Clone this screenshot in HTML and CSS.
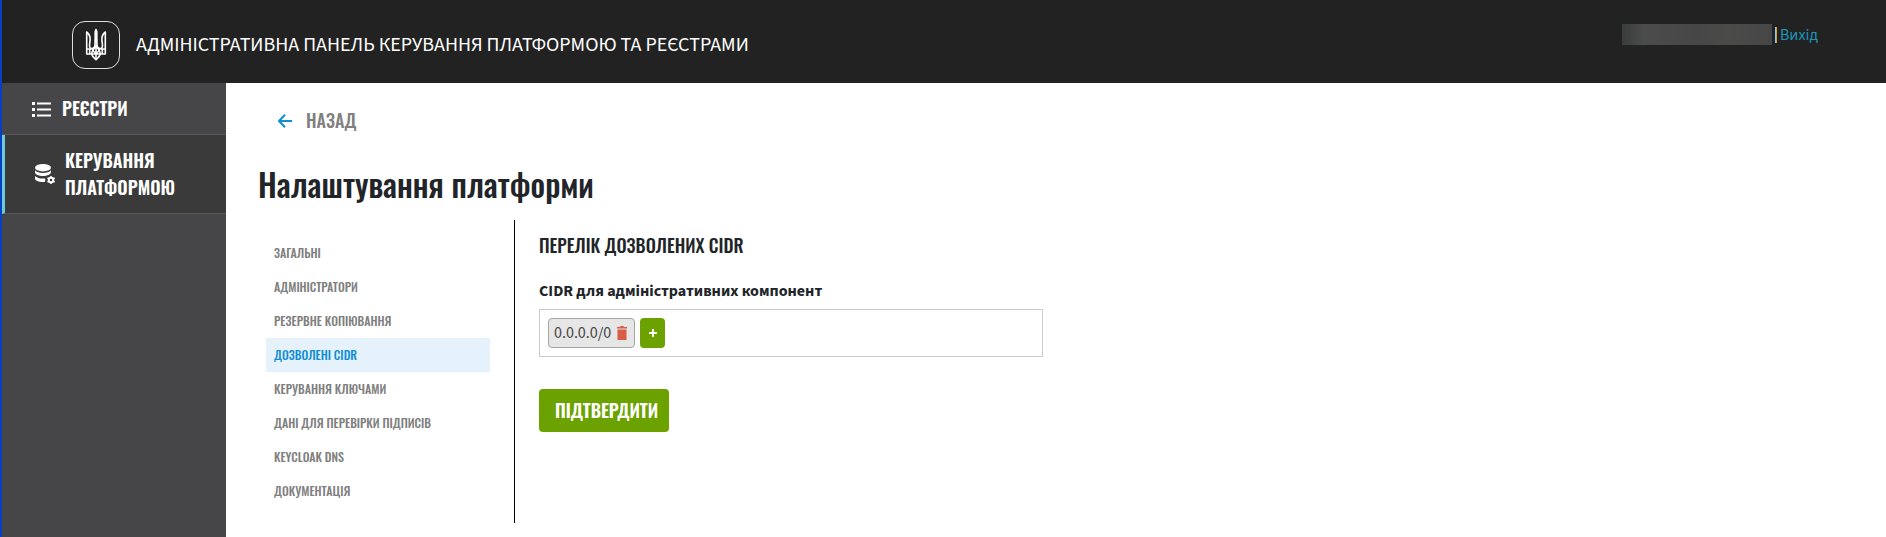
FILE: index.html
```html
<!DOCTYPE html>
<html lang="uk">
<head>
<meta charset="utf-8">
<title>Налаштування платформи</title>
<meta name="viewport" content="width=device-width, initial-scale=1">
<link rel="stylesheet" href="styles.css">
</head>
<body>
<header class="header">
  <div class="brand">
    <svg class="logo" viewBox="0 0 48 48" aria-hidden="true">
      <rect x=".5" y=".5" width="47" height="47" rx="12.5" fill="none" stroke="#fff" stroke-opacity=".85"/>
      <g fill="none" stroke="#fff" stroke-width="1.600" stroke-linejoin="round">
        <path d="M14.7 11v22h4.900c.6 2.500 2.300 3.900 4.400 5.700 2.100-1.800 3.800-3.200 4.400-5.700h4.900V11c-2.600 2-3.500 4.500-3.400 7.500.1 2.800.9 5.500.5 7.200-.3 1.300-1.200 1.900-2.600 1.800-2-.3-2.800-2.300-2.800-4.200l-.3-13L24 8.500l-.7 1.800-.3 13c0 1.900-.8 3.900-2.800 4.200-1.400.1-2.300-.5-2.600-1.800-.4-1.700.4-4.400.5-7.200.1-3-.8-5.500-3.400-7.500z"/>
        <path d="M14.700 28h5M28.300 28h5M17.700 28v5M30.300 28v5M19.600 33h8.800M24 24v14.500M19.600 33c0-3.500 2.600-5 4.400-8.500 1.800 3.500 4.400 5 4.400 8.500M20.500 27.500c.2 2.500 1.500 4 3.500 5 2-1 3.300-2.500 3.500-5"/>
      </g>
      <path d="M24 8l1.200 3-.3 10-.9 4-.9-4-.3-10z" fill="#fff"/>
    </svg>
    <span class="brand-title">АДМІНІСТРАТИВНА ПАНЕЛЬ КЕРУВАННЯ ПЛАТФОРМОЮ ТА РЕЄСТРАМИ</span>
  </div>
  <div class="user">
    <span class="user-name"></span>
    <span class="user-divider"></span>
    <a class="logout" href="#">Вихід</a>
  </div>
</header>
<div class="layout">
  <nav class="sidebar">
    <a class="nav-item" href="#">
      <svg class="nav-icon" viewBox="0 0 20 20" aria-hidden="true" fill="#fff"><path d="M0 3h3v3H0zM5 3.500h14v2H5zM0 9h3v3H0zM5 9.500h14v2H5zM0 15h3v3H0zM5 15.500h14v2H5z"/></svg>
      <span>РЕЄСТРИ</span>
    </a>
    <a class="nav-item nav-item-active" href="#">
      <svg class="nav-icon" viewBox="0 0 20 20" aria-hidden="true" fill="#fff">
        <ellipse cx="8" cy="3.700" rx="8" ry="3.700"/>
        <path d="M0 6.200c1.500 1.800 4.500 2.700 8 2.700s6.500-.9 8-2.700v2c-.3 2.200-3.700 3.700-8 3.700s-8-1.500-8-3.700zM0 12c1.500 1.600 4.200 2.500 7.500 2.600h2.600c.3 1 .2 2.200-.1 3.300-1 .1-1.300.1-2 .1-4.300 0-8-1.500-8-3.500z"/>
        <circle cx="16" cy="16" r="2.300" fill="none" stroke="#fff" stroke-width="2"/>
        <path d="M15.200 12h1.600v1.500h-1.600zM15.200 18.500h1.600V20h-1.600zM12.100 14.600l.8-1.400 1.300.8-.8 1.300zM18 18.100l.8-1.400 1.300.8-.8 1.300zM12.900 18.800l-.8-1.400 1.300-.7.8 1.300zM18.800 15.300l-.8-1.300 1.300-.8.8 1.400z"/>
      </svg>
      <span>КЕРУВАННЯ ПЛАТФОРМОЮ</span>
    </a>
  </nav>
  <main class="main">
    <a class="back" href="#">
      <svg class="back-icon" viewBox="0 0 14 14" aria-hidden="true"><path d="M7 .800L1 7l6 6.200M1 7h13" fill="none" stroke="#118fd4" stroke-width="2"/></svg>
      <span>НАЗАД</span>
    </a>
    <h1 class="title">Налаштування платформи</h1>
    <div class="settings">
      <nav class="tabs">
        <a class="tab" href="#">ЗАГАЛЬНІ</a>
        <a class="tab" href="#">АДМІНІСТРАТОРИ</a>
        <a class="tab" href="#">РЕЗЕРВНЕ КОПІЮВАННЯ</a>
        <a class="tab tab-active" href="#">ДОЗВОЛЕНІ CIDR</a>
        <a class="tab" href="#">КЕРУВАННЯ КЛЮЧАМИ</a>
        <a class="tab" href="#">ДАНІ ДЛЯ ПЕРЕВІРКИ ПІДПИСІВ</a>
        <a class="tab" href="#">KEYCLOAK DNS</a>
        <a class="tab" href="#">ДОКУМЕНТАЦІЯ</a>
      </nav>
      <form class="panel">
        <h2 class="panel-title">ПЕРЕЛІК ДОЗВОЛЕНИХ CIDR</h2>
        <h3 class="label" id="cidr-label">CIDR для адміністративних компонент</h3>
        <div class="cidr-box" role="group" aria-labelledby="cidr-label">
          <span class="chip">0.0.0.0/0
            <button class="chip-remove" type="button" aria-label="Видалити"><svg class="trash" viewBox="0 0 10 14" aria-hidden="true"><path d="M0 1h3l.5-1h3L7 1h3v1.500H0zM.500 3.500h9V14h-9z" fill="#d75d48"/></svg></button>
          </span>
          <button class="add" type="button" aria-label="Додати"><svg class="plus" viewBox="0 0 8 8" aria-hidden="true"><path d="M4 0v8M0 4h8" stroke="#fff" stroke-width="2"/></svg></button>
        </div>
        <button class="submit" type="button">ПІДТВЕРДИТИ</button>
      </form>
    </div>
  </main>
</div>
</body>
</html>
```
FILE: styles.css
```css
:root {
  --condensed: Oswald, "Liberation Sans Narrow", "Liberation Sans", sans-serif;
  --body: "Source Sans 3", "Source Sans Pro", "Noto Sans", sans-serif;
}
* { box-sizing: border-box; }
body {
  margin: 0;
  min-height: 100vh;
  display: flex;
  flex-direction: column;
  border-left: 2px solid #0540c4;
  background: #fff;
  color: #212529;
  font-family: var(--body);
  font-size: 16px;
}
a { text-decoration: none; }
button { border: 0; cursor: pointer; }
.header {
  display: flex;
  justify-content: space-between;
  align-items: flex-start;
  padding: 21px 68px 14px 70px;
  background: #222;
}
.brand { display: flex; align-items: center; gap: 16px; }
.logo { width: 48px; height: 48px; }
.brand-title { color: #fff; font-size: 20px; line-height: 24px; }
.user { display: flex; align-items: center; gap: 3px; padding-top: 3px; }
.user-name {
  width: 150px;
  height: 21px;
  background: linear-gradient(90deg, #3a3d3c, #4c4c4c 15%, #464646 50%, #4b4b4a 70%, #464646);
}
.user-divider { width: 2px; height: 16px; background: linear-gradient(90deg, #8cc8f0 50%, #d0a030 50%); }
.logout { color: #1b96b8; line-height: 20px; }
.layout { flex: 1; display: flex; }
.sidebar { flex: 0 0 224px; background: #464648; }
.nav-item {
  display: flex;
  align-items: center;
  gap: 10px;
  padding: 12px 16px 12px 30px;
  border-bottom: 1px solid #58585a;
  color: #fff;
  font: 600 18px/27px var(--condensed);
}
.nav-item-active {
  border-left: 3px solid #6fcbd8;
  background: #3a3a3a;
}
.nav-icon { flex: none; width: 20px; height: 20px; }
.main { flex: 1; min-width: 0; padding: 24px 32px 14px; }
.back {
  display: flex;
  align-items: center;
  gap: 14px;
  padding-left: 20px;
  color: #808080;
  font: 500 18px/27px var(--condensed);
}
.back-icon { width: 14px; height: 14px; }
.title { margin: 26px 0 12px; font: 500 32px/48px var(--condensed); }
.settings { display: flex; }
.tabs {
  flex: 0 0 257px;
  padding: 16px 24px 15px 8px;
  border-right: 1px solid #000;
}
.tab {
  display: block;
  padding: 0 8px;
  color: #808080;
  font: 500 12px/34px var(--condensed);
}
.tab-active { background: #e6f2fb; color: #118fd4; }
.panel { flex: 0 1 528px; padding: 12px 0 0 24px; }
.panel-title { margin: 0 0 20px; font: 500 18px/27px var(--condensed); }
.label { margin: 0 0 6px; font-size: 16px; line-height: 24px; }
.cidr-box {
  display: flex;
  gap: 5px;
  padding: 8px;
  border: 1px solid #cbc9d9;
}
.chip {
  display: flex;
  align-items: center;
  gap: 6px;
  padding: 0 7px 0 5px;
  border: 1px solid #a5a5a5;
  border-radius: 4px;
  background: #e6e6e6;
  color: #444;
  font: 16px/28px var(--body);
}
.chip-remove { display: flex; padding: 0; background: none; }
.trash { width: 10px; height: 14px; }
.add {
  display: flex;
  align-items: center;
  justify-content: center;
  width: 25px;
  padding: 0;
  border-radius: 4px;
  background: #6ca200;
}
.plus { width: 8px; height: 8px; }
.submit {
  margin-top: 32px;
  padding: 8px 11px 8px 16px;
  border-radius: 4px;
  background: #6ca200;
  color: #fff;
  font: 600 18px/27px var(--condensed);
}
```
